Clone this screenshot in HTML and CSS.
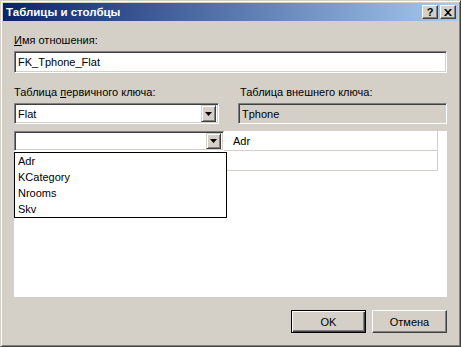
FILE: index.html
```html
<!DOCTYPE html>
<html lang="ru">
<head>
    <meta charset="UTF-8">
    <title>Таблицы и столбцы</title>
    <link rel="stylesheet" href="styles.css">
</head>
<body>
    <div class="window">
        <div class="titlebar">
            <span class="title">Таблицы и столбцы</span>
            <div class="caption-buttons">
                <div class="cap-btn help">?</div>
                <div class="cap-btn close">
                    <svg width="8" height="7" viewBox="0 0 8 7">
                        <path d="M0 0h2l2 2.2L6 0h2L5 3.5 8 7H6L4 4.8 2 7H0l3-3.5z" fill="#000"/>
                    </svg>
                </div>
            </div>
        </div>

        <div class="content">
            <div class="label"><u>И</u>мя отношения:</div>
            <div class="field name-field">FK_Tphone_Flat</div>

            <div class="tables">
                <div class="col left-col">
                    <div class="label">Таблица <u>п</u>ервичного ключа:</div>
                    <div class="field combo">
                        <span class="combo-text">Flat</span>
                        <div class="drop-btn">
                            <svg width="7" height="4" viewBox="0 0 7 4"><path d="M0 0h7L3.5 4z" fill="#000"/></svg>
                        </div>
                    </div>
                </div>
                <div class="col right-col">
                    <div class="label shift">Таблица внешнего ключа:</div>
                    <div class="field readonly">Tphone</div>
                </div>
            </div>

            <div class="grid">
                <div class="grid-row">
                    <div class="cell first">
                        <div class="field combo grid-combo">
                            <span class="combo-text"></span>
                            <div class="drop-btn">
                                <svg width="7" height="4" viewBox="0 0 7 4"><path d="M0 0h7L3.5 4z" fill="#000"/></svg>
                            </div>
                        </div>
                    </div>
                    <div class="cell second">Adr</div>
                </div>
                <div class="grid-row">
                    <div class="cell first"></div>
                    <div class="cell second"></div>
                </div>

                <ul class="dropdown">
                    <li>Adr</li>
                    <li>KCategory</li>
                    <li>Nrooms</li>
                    <li>Skv</li>
                </ul>
            </div>

            <div class="buttons">
                <div class="button default">OK</div>
                <div class="button">Отмена</div>
            </div>
        </div>
    </div>
</body>
</html>
```

FILE: styles.css
```css
* {
    box-sizing: border-box;
}
body {
    margin: 0;
    font-family: "Liberation Sans", Arial, sans-serif;
    font-size: 11px;
    color: #000;
}
.window {
    width: 461px;
    height: 347px;
    background: #d4d0c8;
    border: 1px solid;
    border-color: #d4d0c8 #404040 #404040 #d4d0c8;
    box-shadow: inset 1px 1px #fff, inset -1px -1px #808080;
    padding: 2px;
}
.titlebar {
    height: 18px;
    display: flex;
    align-items: center;
    justify-content: space-between;
    padding: 0 2px 0 3px;
    background: linear-gradient(to right, #0a246a, #a6caf0);
}
.title {
    color: #fff;
    font-weight: bold;
    font-size: 11.5px;
}
.caption-buttons {
    display: flex;
    gap: 2px;
}
.cap-btn {
    width: 16px;
    height: 14px;
    background: #d4d0c8;
    border: 1px solid;
    border-color: #fff #404040 #404040 #fff;
    box-shadow: inset -1px -1px #808080;
    display: flex;
    align-items: center;
    justify-content: center;
    font-weight: bold;
    font-size: 11px;
    line-height: 12px;
}
.content {
    padding: 13px 11px 0 11px;
}
.label {
    height: 13px;
    line-height: 13px;
    white-space: nowrap;
}
.label.shift {
    padding-left: 2px;
}
.field {
    background: #fff;
    border: 1px solid;
    border-color: #808080 #fff #fff #808080;
    box-shadow: inset 1px 1px #404040, inset -1px -1px #d4d0c8;
    display: flex;
    align-items: center;
    padding: 0 3px;
    white-space: nowrap;
}
.name-field {
    margin-top: 4px;
    height: 22px;
}
.tables {
    display: flex;
    gap: 19px;
    margin-top: 13px;
}
.left-col {
    width: 205px;
}
.right-col {
    flex: 1;
}
.tables .field {
    margin-top: 4px;
    height: 21px;
}
.readonly {
    background: #d4d0c8;
}
.combo {
    justify-content: space-between;
    padding: 0 2px 0 3px;
}
.drop-btn {
    width: 15px;
    height: 17px;
    background: #d4d0c8;
    border: 1px solid;
    border-color: #d4d0c8 #404040 #404040 #d4d0c8;
    box-shadow: inset 1px 1px #fff, inset -1px -1px #808080;
    display: flex;
    align-items: center;
    justify-content: center;
}
.grid {
    position: relative;
    margin-top: 7px;
    height: 166px;
    background: #fff;
}
.grid-row {
    display: flex;
    width: 424px;
    height: 20px;
    border-bottom: 1px solid #d4d0c8;
}
.cell {
    height: 100%;
    display: flex;
    align-items: center;
}
.cell.first {
    width: 213px;
}
.cell.second {
    flex: 1;
    padding-left: 6px;
    border-right: 1px solid #d4d0c8;
}
.grid-combo {
    width: 210px;
    height: 20px;
    margin-top: 1px;
}
.grid-combo .drop-btn {
    height: 16px;
}
.dropdown {
    position: absolute;
    top: 21px;
    left: 0;
    width: 213px;
    margin: 0;
    padding: 0;
    list-style: none;
    background: #fff;
    border: 1px solid #000;
}
.dropdown li {
    height: 16px;
    line-height: 16px;
    padding-left: 3px;
}
.buttons {
    display: flex;
    justify-content: flex-end;
    gap: 6px;
    margin-top: 13px;
}
.button {
    width: 75px;
    height: 23px;
    display: flex;
    align-items: center;
    justify-content: center;
    border: 1px solid;
    border-color: #fff #404040 #404040 #fff;
    box-shadow: inset -1px -1px #808080;
}
.button.default {
    border-color: #000;
    box-shadow: inset 1px 1px #fff, inset -1px -1px #404040, inset -2px -2px #808080;
}
```
